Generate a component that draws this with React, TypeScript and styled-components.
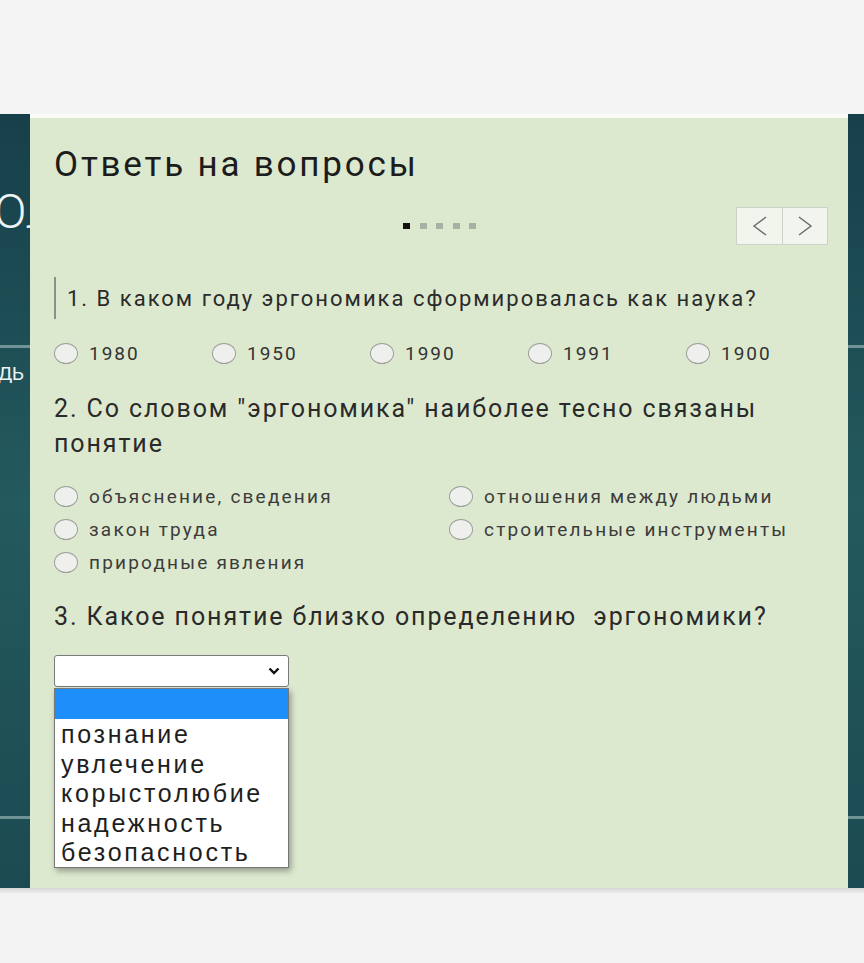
import styled, { createGlobalStyle } from "styled-components";

const GlobalStyle = createGlobalStyle`
  html, body {
    margin: 0;
    padding: 0;
    background: #f3f3f3;
  }
  * { box-sizing: border-box; }
`;

const years = ["1980", "1950", "1990", "1991", "1900"];
const concepts = [
  "объяснение, сведения",
  "отношения между людьми",
  "закон труда",
  "строительные инструменты",
  "природные явления",
];
const choices = ["познание", "увлечение", "корыстолюбие", "надежность", "безопасность"];

export default function App() {
  return (
    <Page>
      <GlobalStyle />
      <TopBar />
      <Band>
        <LeftStrip>
          <BigLetters>ОЛ</BigLetters>
          <SmallLetters>ДЬ</SmallLetters>
        </LeftStrip>
        <Panel>
          <Title>Ответь на вопросы</Title>
          <PagerRow>
            <span />
            <Dots>
              {[0, 1, 2, 3, 4].map((i) => (
                <Dot key={i} $active={i === 0} />
              ))}
            </Dots>
            <NavGroup>
              <NavButton>
                <svg width="16" height="20" viewBox="0 0 16 20">
                  <path d="M14 1 L2 10 L14 19" fill="none" stroke="#6a6a6a" strokeWidth="1.4" />
                </svg>
              </NavButton>
              <NavButton>
                <svg width="16" height="20" viewBox="0 0 16 20">
                  <path d="M2 1 L14 10 L2 19" fill="none" stroke="#6a6a6a" strokeWidth="1.4" />
                </svg>
              </NavButton>
            </NavGroup>
          </PagerRow>

          <QuoteQuestion>1. В каком году эргономика сформировалась как наука?</QuoteQuestion>
          <YearRow>
            {years.map((y) => (
              <Option key={y}>
                <Radio />
                <YearLabel>{y}</YearLabel>
              </Option>
            ))}
          </YearRow>

          <Question $gap={21}>2. Со словом "эргономика" наиболее тесно связаны понятие</Question>
          <ConceptGrid>
            {concepts.map((c) => (
              <Option key={c}>
                <Radio />
                <ConceptLabel>{c}</ConceptLabel>
              </Option>
            ))}
          </ConceptGrid>

          <Question $gap={20}>3. Какое понятие близко определению&nbsp; эргономики?</Question>
          <SelectWrap>
            <SelectBox>
              <svg width="12" height="8" viewBox="0 0 12 8">
                <path d="M1.5 1.5 L6 6 L10.5 1.5" fill="none" stroke="#111" strokeWidth="2.4" />
              </svg>
            </SelectBox>
            <DropList>
              <DropItem $highlighted />
              {choices.map((c) => (
                <DropItem key={c}>{c}</DropItem>
              ))}
            </DropList>
          </SelectWrap>
        </Panel>
        <RightStrip />
      </Band>
      <BottomShade />
    </Page>
  );
}

const Page = styled.div`
  height: 963px;
  background: #f3f3f3;
  overflow: hidden;
`;

const TopBar = styled.div`
  height: 114px;
  background: #f4f4f4;
`;

const bandLines = `
  linear-gradient(to bottom,
    transparent 231px, rgba(140, 170, 172, 0.75) 231px, rgba(140, 170, 172, 0.75) 234px, transparent 234px,
    transparent 702px, rgba(140, 170, 172, 0.75) 702px, rgba(140, 170, 172, 0.75) 705px, transparent 705px),
  linear-gradient(to bottom, #173f4a 0%, #235a5e 50%, #1c4a52 100%)
`;

const Band = styled.div`
  display: flex;
  height: 774px;
  background: ${bandLines};
`;

const LeftStrip = styled.div`
  width: 30px;
  flex: none;
  overflow: hidden;
  white-space: nowrap;
  font-family: Roboto, "Noto Sans", sans-serif;
  color: #eef4f4;
  padding-top: 70px;
`;

const BigLetters = styled.div`
  font-size: 48px;
  font-weight: 300;
  line-height: 56px;
  margin-left: -6px;
`;

const SmallLetters = styled.div`
  font-size: 19px;
  line-height: 24px;
  margin-top: 122px;
  margin-left: -2px;
`;

const RightStrip = styled.div`
  width: 16px;
  flex: none;
`;

const Panel = styled.div`
  flex: 1;
  min-width: 0;
  background: #dde9cf;
  border-top: 4px solid #fafaf8;
  padding: 26px 20px 0 24px;
  font-family: Roboto, "Noto Sans", sans-serif;
  display: flex;
  flex-direction: column;
`;

const Title = styled.h1`
  margin: 0;
  font-size: 35px;
  font-weight: 400;
  line-height: 41px;
  letter-spacing: 2.8px;
  color: #1c1c1c;
`;

const PagerRow = styled.div`
  display: grid;
  grid-template-columns: 1fr auto 1fr;
  align-items: center;
  margin-top: 22px;
  height: 38px;
`;

const Dots = styled.div`
  display: flex;
  gap: 9.5px;
  margin-right: 3px;
`;

const Dot = styled.span<{ $active?: boolean }>`
  width: 7px;
  height: 6px;
  background: ${(p) => (p.$active ? "#111" : "#a9b1a4")};
`;

const NavGroup = styled.div`
  justify-self: end;
  display: flex;
  border: 1px solid #cdd3c8;
  background: #f1f5ed;
  height: 38px;
`;

const NavButton = styled.div`
  width: 45px;
  display: flex;
  align-items: center;
  justify-content: center;
  & + & {
    border-left: 1px solid #cdd3c8;
  }
`;

const QuoteQuestion = styled.div`
  margin-top: 32px;
  height: 42px;
  display: flex;
  align-items: center;
  border-left: 2px solid #8c8f88;
  padding-left: 11px;
  font-size: 22px;
  letter-spacing: 2px;
  color: #2b2b2b;
`;

const YearRow = styled.div`
  display: grid;
  grid-template-columns: repeat(4, 158px) auto;
  margin-top: 18px;
`;

const Option = styled.label`
  display: flex;
  align-items: center;
  gap: 11px;
  height: 33px;
  white-space: nowrap;
`;

const Radio = styled.span`
  width: 24px;
  height: 21px;
  flex: none;
  border-radius: 50%;
  border: 1.5px solid #9c9e9a;
  background: #efefed;
`;

const YearLabel = styled.span`
  font-size: 19px;
  letter-spacing: 2px;
  color: #333;
`;

const Question = styled.div<{ $gap?: number }>`
  margin-top: ${(p) => p.$gap ?? 25}px;
  font-size: 25px;
  line-height: 35px;
  letter-spacing: 1.9px;
  color: #2a2a2a;
  max-width: 730px;
`;

const ConceptGrid = styled.div`
  display: grid;
  grid-template-columns: 395px 1fr;
  margin-top: 19px;
`;

const ConceptLabel = styled.span`
  font-size: 19px;
  letter-spacing: 2.2px;
  color: #3c3c3c;
`;

const SelectWrap = styled.div`
  position: relative;
  margin-top: 21px;
  width: 235px;
`;

const SelectBox = styled.div`
  height: 32px;
  background: #fff;
  border: 1px solid #7a7a7a;
  border-radius: 3px;
  display: flex;
  align-items: center;
  justify-content: flex-end;
  padding-right: 8px;
`;

const DropList = styled.div`
  position: absolute;
  top: 33px;
  left: 0;
  width: 235px;
  background: #fff;
  border: 1px solid #777;
  box-shadow: 2px 3px 6px rgba(0, 0, 0, 0.35);
  font-family: "Liberation Sans", Arial, sans-serif;
`;

const DropItem = styled.div<{ $highlighted?: boolean }>`
  height: ${(p) => (p.$highlighted ? 30 : 29.6)}px;
  line-height: 30px;
  padding-left: 6px;
  font-size: 25px;
  letter-spacing: 2.7px;
  color: #1e1e1e;
  background: ${(p) => (p.$highlighted ? "#1e8ffa" : "transparent")};
`;

const BottomShade = styled.div`
  height: 5px;
  background: linear-gradient(to bottom, #d6d6d6, #ececec);
`;
